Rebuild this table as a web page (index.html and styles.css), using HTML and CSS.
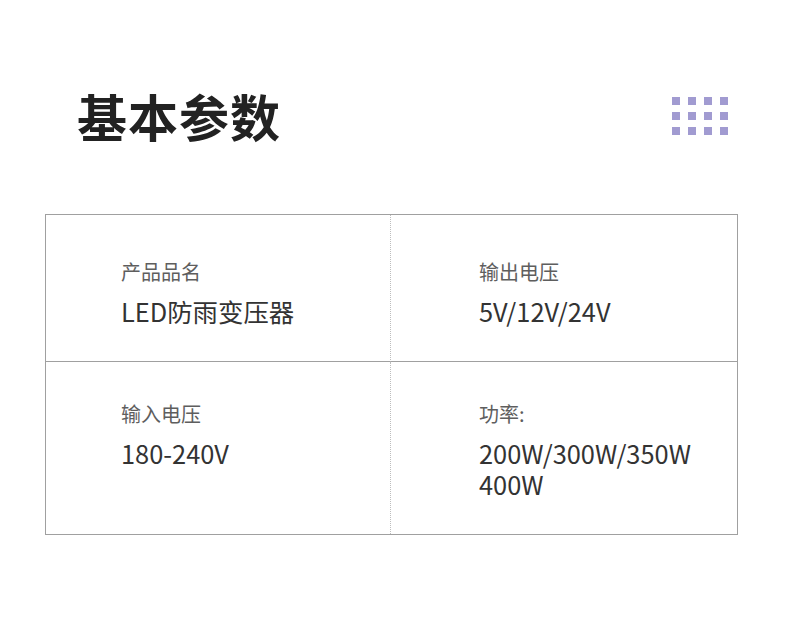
FILE: index.html
```html
<!DOCTYPE html>
<html lang="zh">
<head>
<meta charset="utf-8">
<link rel="stylesheet" href="styles.css">
</head>
<body>
<div class="page">
  <div class="header">
    <h1 class="title">基本参数</h1>
    <div class="dots">
      <span></span><span></span><span></span><span></span>
      <span></span><span></span><span></span><span></span>
      <span></span><span></span><span></span><span></span>
    </div>
  </div>
  <div class="specs">
    <div class="cell left row1">
      <div class="label">产品品名</div>
      <div class="value">LED防雨变压器</div>
    </div>
    <div class="cell right row1">
      <div class="label">输出电压</div>
      <div class="value">5V/12V/24V</div>
    </div>
    <div class="cell left row2">
      <div class="label">输入电压</div>
      <div class="value">180-240V</div>
    </div>
    <div class="cell right row2">
      <div class="label">功率:</div>
      <div class="value">200W/300W/350W<br>400W</div>
    </div>
  </div>
</div>
</body>
</html>
```
FILE: styles.css
```css
html, body {
  margin: 0;
  padding: 0;
  background: #ffffff;
}
body {
  font-family: "Noto Sans CJK SC", "Noto Sans", sans-serif;
  color: #333;
}
.page {
  padding: 89px 52px 0 45px;
}
.header {
  display: flex;
  justify-content: space-between;
  align-items: center;
  padding: 0 10px 0 32px;
}
.title {
  margin: 0;
  font-size: 50px;
  line-height: 52px;
  font-weight: 700;
  color: #222;
  letter-spacing: 1px;
}
.dots {
  display: grid;
  grid-template-columns: repeat(4, 8px);
  grid-auto-rows: 8px;
  column-gap: 8px;
  row-gap: 7px;
  margin-top: 2px;
}
.dots span {
  background: #a19bd1;
}
.specs {
  margin-top: 73px;
  border: 1px solid #a0a0a0;
  display: grid;
  grid-template-columns: 345px 1fr;
  grid-template-rows: 147px 172px;
}
.cell {
  display: flex;
  flex-direction: column;
  box-sizing: border-box;
}
.cell.left {
  border-right: 1px dotted #bdbdbd;
  padding-left: 75px;
}
.cell.right {
  padding-left: 88px;
}
.cell.row1 {
  border-bottom: 1px solid #a0a0a0;
  padding-top: 45px;
}
.cell.row2 {
  padding-top: 40px;
}
.label {
  font-size: 20px;
  line-height: 24px;
  color: #5e5e5e;
}
.value {
  font-size: 25.4px;
  line-height: 31px;
  color: #333;
  margin-top: 12px;
}
```
